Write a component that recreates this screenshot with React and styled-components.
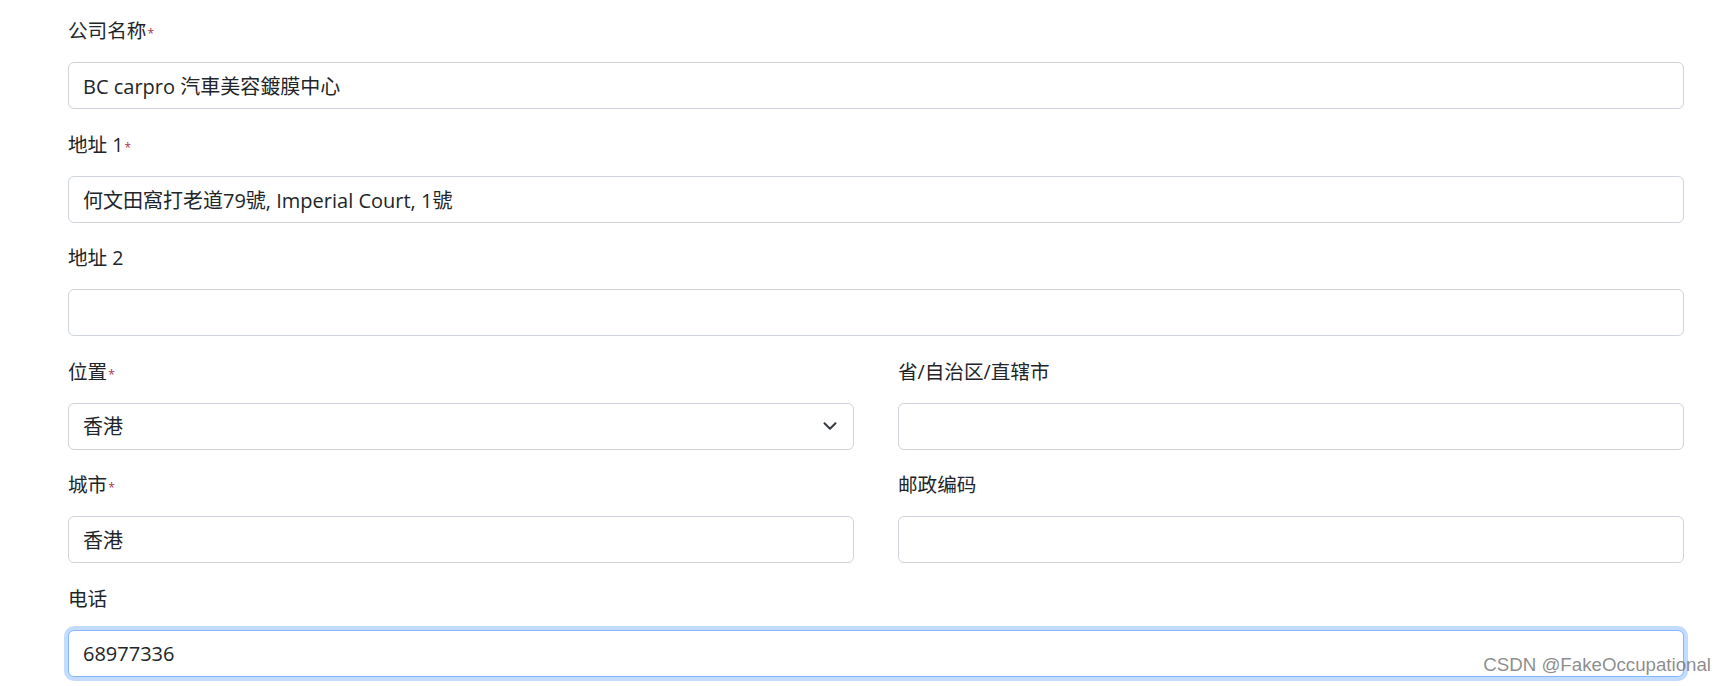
import React from "react";
import styled, { createGlobalStyle } from "styled-components";

const GlobalStyle = createGlobalStyle`
  html, body {
    margin: 0;
    padding: 0;
    background: #fff;
    overflow: hidden;
  }
  body {
    font-family: "Open Sans", "Noto Sans CJK SC", sans-serif;
    color: #212529;
  }
`;

const Page = styled.div`
  position: relative;
  height: 686px;
  padding: 19px 42px 0 68px;
  box-sizing: border-box;
`;

const Form = styled.form`
  display: flex;
  flex-direction: column;
  gap: 23.5px;
`;

const Row = styled.div`
  display: grid;
  grid-template-columns: 1fr 1fr;
  column-gap: 44px;
`;

const Group = styled.div`
  display: flex;
  flex-direction: column;
  gap: 19px;
`;

const Label = styled.label`
  font-size: 19.6px;
  line-height: 24px;
  height: 24px;
  color: #212529;
  white-space: nowrap;
`;

const Star = styled.span`
  font-size: 12px;
  color: #a8324a;
  margin-left: 1px;
`;

const Input = styled.input`
  box-sizing: border-box;
  width: 100%;
  height: 47px;
  padding: 0 14px;
  font-family: "Open Sans", "Noto Sans CJK SC", sans-serif;
  font-size: 20px;
  color: #212529;
  background: #fff;
  border: 1px solid #ced4da;
  border-radius: 6px;
  outline: none;

  ${(p) =>
    p.$focused &&
    `
    border-color: #86b7fe;
    box-shadow: 0 0 0 4px rgba(13, 110, 253, 0.25);
  `}
`;

const SelectWrap = styled.div`
  position: relative;
`;

const Select = styled.select`
  box-sizing: border-box;
  width: 100%;
  height: 47px;
  padding: 0 40px 0 14px;
  font-family: "Open Sans", "Noto Sans CJK SC", sans-serif;
  font-size: 20px;
  color: #212529;
  background: #fff;
  border: 1px solid #ced4da;
  border-radius: 6px;
  appearance: none;
  outline: none;
`;

const Chevron = styled.svg`
  position: absolute;
  right: 17px;
  top: 50%;
  transform: translateY(-50%);
  pointer-events: none;
`;

const Watermark = styled.div`
  position: absolute;
  right: 15px;
  top: 655px;
  font-family: "Liberation Sans", Arial, sans-serif;
  font-size: 18.7px;
  line-height: 20px;
  color: rgba(120, 120, 120, 0.85);
  white-space: nowrap;
`;

const Field = ({ label, required, children }) => (
  <Group>
    <Label>
      {label}
      {required && <Star>*</Star>}
    </Label>
    {children}
  </Group>
);

const App = () => {
  return (
    <>
      <GlobalStyle />
      <Page>
        <Form onSubmit={(e) => e.preventDefault()}>
          <Field label="公司名称" required>
            <Input defaultValue="BC carpro 汽車美容鍍膜中心" />
          </Field>
          <Field label="地址 1" required>
            <Input defaultValue="何文田窩打老道79號, Imperial Court, 1號" />
          </Field>
          <Field label="地址 2">
            <Input />
          </Field>
          <Row>
            <Field label="位置" required>
              <SelectWrap>
                <Select defaultValue="hk">
                  <option value="hk">香港</option>
                </Select>
                <Chevron width="14" height="9" viewBox="0 0 14 9">
                  <path
                    d="M1.5 1.8 7 7.2l5.5-5.4"
                    fill="none"
                    stroke="#343a40"
                    strokeWidth="2"
                    strokeLinecap="round"
                    strokeLinejoin="round"
                  />
                </Chevron>
              </SelectWrap>
            </Field>
            <Field label="省/自治区/直辖市">
              <Input />
            </Field>
          </Row>
          <Row>
            <Field label="城市" required>
              <Input defaultValue="香港" />
            </Field>
            <Field label="邮政编码">
              <Input />
            </Field>
          </Row>
          <Field label="电话">
            <Input defaultValue="68977336" $focused autoFocus />
          </Field>
        </Form>
        <Watermark>CSDN @FakeOccupational</Watermark>
      </Page>
    </>
  );
};

export default App;
